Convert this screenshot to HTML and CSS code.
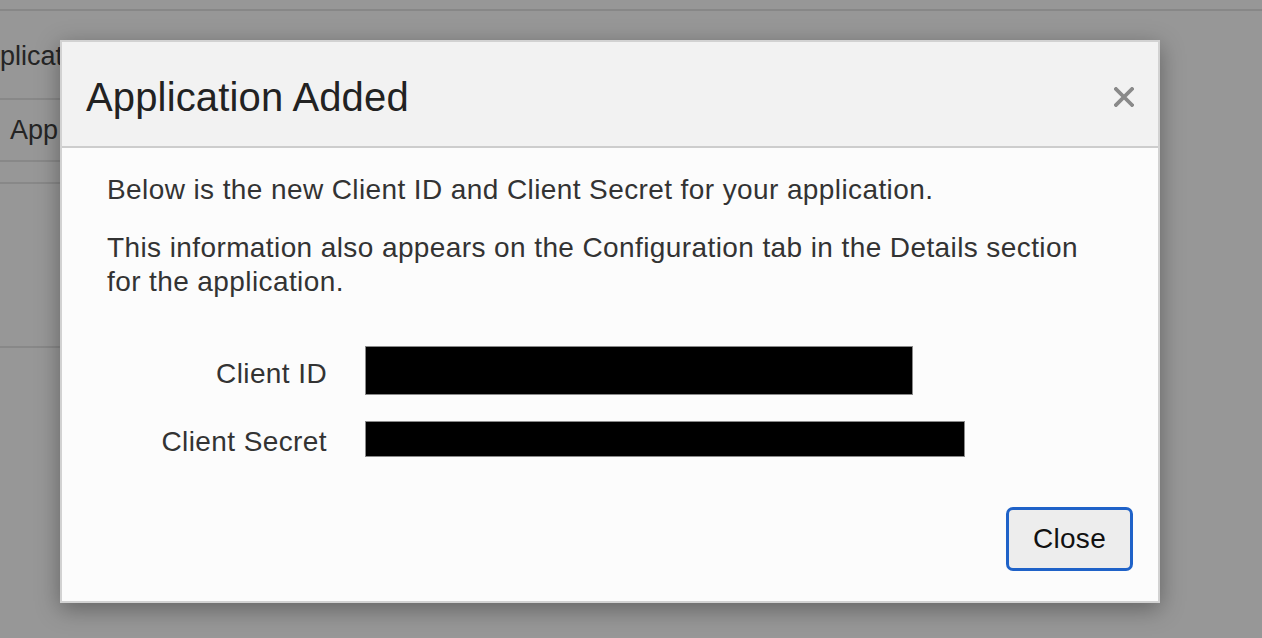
FILE: index.html
```html
<!DOCTYPE html>
<html>
<head>
<meta charset="utf-8">
<link rel="stylesheet" href="styles.css">
</head>
<body>
<div class="page">
  <div class="topbar"></div>
  <div class="list">
    <div class="row row-1"><span class="cut">plicat</span></div>
    <div class="row row-2"><span class="app">App</span></div>
    <div class="row row-3"></div>
    <div class="row row-4"></div>
  </div>
</div>

<div class="dialog" role="dialog">
  <div class="dialog-header">
    <h1 class="dialog-title">Application Added</h1>
    <button class="dialog-x" aria-label="Close">
      <svg width="20" height="20" viewBox="0 0 20 20"><path d="M2 2 L18 18 M18 2 L2 18" stroke="#8a8a8a" stroke-width="3.8" stroke-linecap="square"/></svg>
    </button>
  </div>
  <div class="dialog-body">
    <p class="msg">Below is the new Client ID and Client Secret for your application.</p>
    <p class="msg">This information also appears on the Configuration tab in the Details section for the application.</p>
    <div class="creds">
      <div class="label">Client ID</div>
      <div class="redact redact-id"></div>
      <div class="label">Client Secret</div>
      <div class="redact redact-secret"></div>
    </div>
    <div class="footer">
      <button class="btn-close">Close</button>
    </div>
  </div>
</div>
</body>
</html>
```

FILE: styles.css
```css
html, body {
  margin: 0;
  padding: 0;
}
body {
  background: #979797;
  font-family: "Liberation Sans", Arial, sans-serif;
  width: 1262px;
  height: 638px;
  overflow: hidden;
  position: relative;
}
.page {
  width: 100%;
}
.topbar {
  height: 9px;
  border-bottom: 2px solid #878787;
}
.list {
  width: 300px;
}
.row {
  border-bottom: 2px solid #888888;
  box-sizing: border-box;
  display: flex;
  align-items: center;
  color: #252525;
  font-size: 27px;
}
.row-1 { height: 89px; padding-top: 4px; }
.row-2 { height: 62px; }
.row-3 { height: 22px; }
.row-4 { height: 164px; }
.cut { padding-left: 0; }
.app { padding-left: 10px; }

.dialog {
  position: absolute;
  left: 60px;
  top: 40px;
  width: 1100px;
  height: 563px;
  box-sizing: border-box;
  border: 2px solid #d2d2d2;
  background: #fcfcfc;
  box-shadow: 0 6px 22px rgba(0, 0, 0, 0.35);
  display: flex;
  flex-direction: column;
}
.dialog-header {
  height: 106px;
  box-sizing: border-box;
  background: #f2f2f2;
  border-bottom: 2px solid #cdcdcd;
  display: flex;
  align-items: center;
  justify-content: space-between;
  padding: 6px 24px 0 24px;
}
.dialog-title {
  margin: 0;
  font-weight: normal;
  font-size: 40px;
  letter-spacing: 0.15px;
  color: #222222;
}
.dialog-x {
  background: none;
  border: 0;
  padding: 0;
  width: 20px;
  height: 20px;
  display: flex;
}
.dialog-body {
  flex: 1;
  display: flex;
  flex-direction: column;
  padding: 25px 25px 30px 45px;
  color: #333333;
  font-size: 28px;
  letter-spacing: 0.4px;
}
.msg {
  margin: 0 0 24px 0;
  line-height: 34px;
  padding-right: 20px;
}
.creds {
  margin-top: 23px;
  display: grid;
  grid-template-columns: 220px auto;
  column-gap: 38px;
  row-gap: 24px;
  align-items: center;
  justify-items: start;
}
.label {
  justify-self: end;
  padding-top: 7px;
  color: #333333;
}
.redact {
  background: #000;
  border: 1px solid #8a8a8a;
  box-sizing: border-box;
}
.redact-id { width: 548px; height: 49px; }
.redact-secret { width: 600px; height: 36px; }
.footer {
  margin-top: auto;
  display: flex;
  justify-content: flex-end;
}
.btn-close {
  width: 127px;
  height: 64px;
  box-sizing: border-box;
  border: 3px solid #1f62c8;
  border-radius: 7px;
  background: #ededed;
  font-family: "Liberation Sans", Arial, sans-serif;
  font-size: 28px;
  color: #111111;
  letter-spacing: 0.3px;
  padding: 0;
}
```
